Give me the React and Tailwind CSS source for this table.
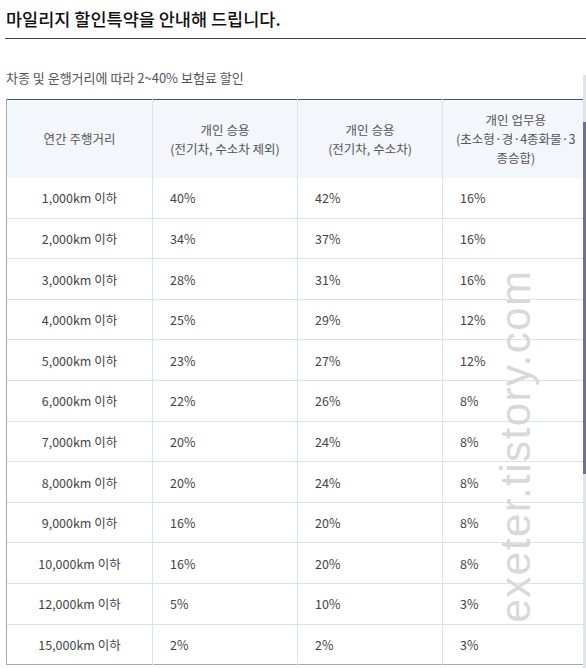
import React from 'react';

const rows = [
  ['1,000km 이하', '40%', '42%', '16%'],
  ['2,000km 이하', '34%', '37%', '16%'],
  ['3,000km 이하', '28%', '31%', '16%'],
  ['4,000km 이하', '25%', '29%', '12%'],
  ['5,000km 이하', '23%', '27%', '12%'],
  ['6,000km 이하', '22%', '26%', '8%'],
  ['7,000km 이하', '20%', '24%', '8%'],
  ['8,000km 이하', '20%', '24%', '8%'],
  ['9,000km 이하', '16%', '20%', '8%'],
  ['10,000km 이하', '16%', '20%', '8%'],
  ['12,000km 이하', '5%', '10%', '3%'],
  ['15,000km 이하', '2%', '2%', '3%'],
];

const App = () => {
  return (
    <div className="relative w-[586px] h-[668px] overflow-hidden bg-white font-['Noto_Sans_CJK_KR','Noto_Sans',sans-serif]">
      <h1 className="ml-[5px] pt-[6px] pb-[6px] pl-[1px] text-[17.5px] leading-[26px] font-medium text-[#111] border-b border-[#3d4252]">
        마일리지 할인특약을 안내해 드립니다.
      </h1>

      <p className="ml-[6px] mt-[29px] mb-[11px] text-[13px] leading-[20px] text-[#555]">
        차종 및 운행거리에 따라 2~40% 보험료 할인
      </p>

      <table className="ml-[6px] w-[582px] table-fixed border-collapse text-[12.5px] text-[#444]">
        <colgroup>
          <col className="w-[146px]" />
          <col className="w-[145px]" />
          <col className="w-[145px]" />
          <col className="w-[146px]" />
        </colgroup>
        <thead>
          <tr className="h-[78px] bg-[#f3f6fa] border-t border-t-[#4b5263] text-[#555] leading-[19px]">
            <th className="font-normal border-l border-l-[#a3aab6] border-r border-r-[#dde2ea]">연간 주행거리</th>
            <th className="font-normal border-r border-[#dde2ea]">개인 승용<br />(전기차, 수소차 제외)</th>
            <th className="font-normal border-r border-[#dde2ea]">개인 승용<br />(전기차, 수소차)</th>
            <th className="font-normal">개인 업무용<br />(초소형·경·4종화물·3<br />종승합)</th>
          </tr>
        </thead>
        <tbody>
          {rows.map((r, i) => (
            <tr
              key={i}
              className={`h-[40.6px] ${i === rows.length - 1 ? 'border-b border-b-[#a3aab6]' : 'border-b border-b-[#dde2ea]'}`}
            >
              <td className="pt-[2px] text-center border-l border-l-[#a3aab6] border-r border-r-[#dde2ea]">{r[0]}</td>
              <td className="pt-[2px] pl-[17px] border-r border-[#dde2ea]">{r[1]}</td>
              <td className="pt-[2px] pl-[17px] border-r border-[#dde2ea]">{r[2]}</td>
              <td className="pt-[2px] pl-[17px]">{r[3]}</td>
            </tr>
          ))}
        </tbody>
      </table>

      {/* watermark */}
      <div className="absolute left-[515px] top-[446px] -translate-x-1/2 -translate-y-1/2 -rotate-90 whitespace-nowrap font-['Liberation_Sans',sans-serif] text-[42px] tracking-[1.5px] text-[#d8d8d8] pointer-events-none">
        exeter.tistory.com
      </div>

      {/* scrollbar */}
      <div className="absolute right-0 top-[75px] bottom-0 w-[3px] bg-[#dfe4ea]">
        <div className="mt-[47px] h-[352px] bg-[#6b7390]" />
      </div>
    </div>
  );
};

export default App;
